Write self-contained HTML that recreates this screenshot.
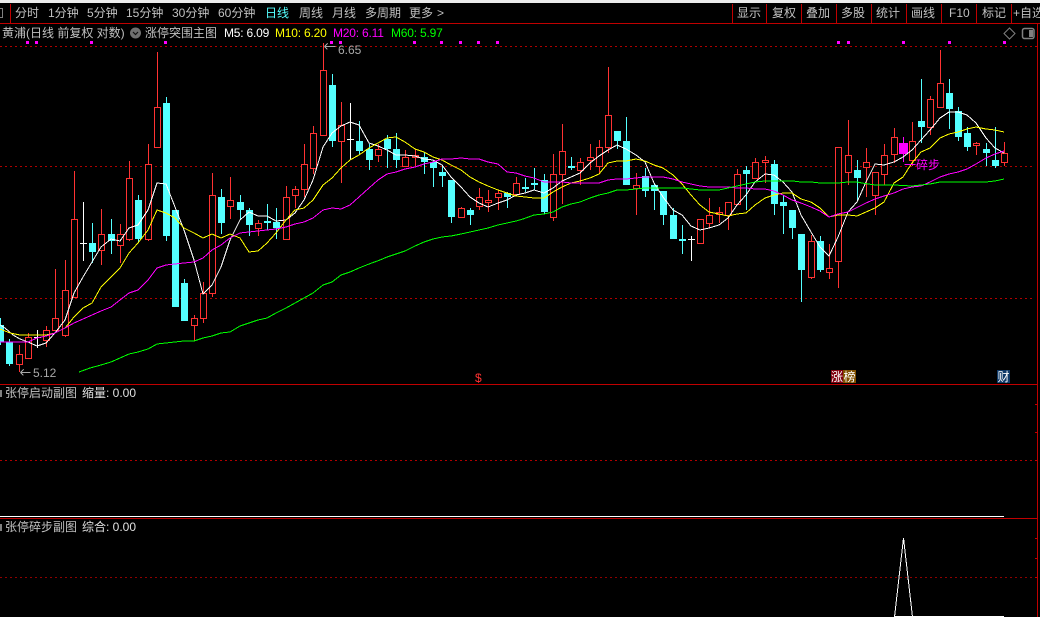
<!DOCTYPE html>
<html><head><meta charset="utf-8"><style>
html,body{margin:0;padding:0;background:#000;overflow:hidden}
#p{position:relative;width:1040px;height:617px;background:#000;overflow:hidden;font:12px/14px "Liberation Sans","WenQuanYi Zen Hei","Noto Sans CJK SC",sans-serif;color:#c0c0c0}
#p div{position:absolute;white-space:nowrap}
svg{position:absolute;left:0;top:0}
</style></head><body><div id="p">
<svg width="1040" height="617" viewBox="0 0 1040 617">
<rect x="0" y="0" width="1040" height="3" fill="#ececec"/>
<g shape-rendering="crispEdges" fill="none">
<path stroke="#c00000" d="M0 23.5H1040M10.5 4V23M732.5 4V23M766.5 4V23M801.5 4V23M836.5 4V23M871.5 4V23M906.5 4V23M941.5 4V23M976.5 4V23M1011.5 4V23M1037.5 23V617M0 384.5H1038M0 518.5H1038M1035 404.5h3M1035 432.5h3M1035 460.5h3M1035 538.5h3M1035 558.5h3M1035 577.5h3M1035 46.5h3"/>
<path stroke="#b00000" stroke-dasharray="2 3" d="M0 46.5H1034M0 166.5H1034M0 298.5H1034M0 460.5H1034"/>
<path stroke="#900000" stroke-dasharray="2 3" d="M0 577.5H1034"/>
<path stroke="#fff" d="M0 516.5H1004M894 616.5H1004"/>
<path stroke="#fff" d="M894.5 617L903.5 538L912.5 617"/>
<path stroke="#808080" d="M0 8.5h2.5v9h-2.5"/>
<path fill="#808080" stroke="none" d="M0 390h2v7h-2zM0 524h2v7h-2z"/>
<path fill="#ff00ff" stroke="none" d="M26 41h3v3h-3zM35 41h3v3h-3zM90 41h3v3h-3zM164 41h3v3h-3zM330 41h3v3h-3zM339 41h3v3h-3zM413 41h3v3h-3zM440 41h3v3h-3zM459 41h3v3h-3zM477 41h3v3h-3zM496 41h3v3h-3zM837 41h3v3h-3zM847 41h3v3h-3zM902 41h3v3h-3zM948 41h3v3h-3zM1003 41h3v3h-3z"/>
</g>
<g fill="none" stroke="#808080"><path d="M1009.5 28l5.5 5.5-5.5 5.5-5.5-5.5z"/><rect x="1022.5" y="28.5" width="11.5" height="10" rx="2" stroke-width="1.5"/><rect x="1029" y="30" width="4" height="7" fill="#808080" stroke="none"/></g>
<circle cx="135.5" cy="33" r="5.5" fill="#707070"/><path d="M133 32l2.5 2.5L138 32" fill="none" stroke="#111" stroke-width="1.2"/>
<g shape-rendering="crispEdges">
<path fill="none" stroke="#ff3232" d="M19.5 345V372M28.5 333V359M46.5 326V347M55.5 269V331M65.5 260V337M74.5 171V298M101.5 209V265M120.5 224V263M129.5 161V241M148.5 144V241M157.5 52V148M194.5 315V341M203.5 282V323M212.5 173V297M230.5 177V219M258.5 220V236M286.5 186V240M295.5 186V208M304.5 144V197M313.5 126V174M323.5 43V136M341.5 102V183M378.5 144V162M405.5 150V167M415.5 149V166M461.5 207V218M479.5 188V210M488.5 190V212M498.5 190V210M516.5 177V195M553.5 154V221M562.5 124V204M580.5 158V185M590.5 144V170M599.5 140V174M608.5 67V153M636.5 173V215M700.5 219V244M709.5 198V228M719.5 207V223M728.5 202V230M737.5 169V205M755.5 158V179M765.5 156V183M811.5 235V279M829.5 244V279M838.5 147V288M848.5 120V185M866.5 148V197M875.5 172V215M884.5 144V185M894.5 128V163M912.5 122V166M930.5 96V135M940.5 50V108M976.5 142V155M1004.5 142V166"/>
<path fill="#000" stroke="#ff3232" d="M16.5 354.5h6v10h-6zM25.5 337.5h6v21h-6zM43.5 330.5h6v10h-6zM52.5 318.5h6v12h-6zM62.5 290.5h6v45h-6zM71.5 219.5h6v78h-6zM98.5 234.5h6v16h-6zM117.5 234.5h6v11h-6zM126.5 178.5h6v61h-6zM145.5 164.5h6v75h-6zM154.5 107.5h6v40h-6zM191.5 318.5h6v7h-6zM200.5 293.5h6v25h-6zM209.5 195.5h6v98h-6zM227.5 200.5h6v6h-6zM255.5 223.5h6v5h-6zM283.5 197.5h6v42h-6zM292.5 189.5h6v6h-6zM301.5 164.5h6v25h-6zM310.5 133.5h6v35h-6zM320.5 70.5h6v65h-6zM338.5 125.5h6v16h-6zM375.5 149.5h6v6h-6zM402.5 157.5h6v9h-6zM412.5 155.5h6v2h-6zM458.5 208.5h6v9h-6zM476.5 197.5h6v9h-6zM485.5 200.5h6v2h-6zM495.5 193.5h6v4h-6zM513.5 183.5h6v11h-6zM550.5 174.5h6v43h-6zM559.5 151.5h6v23h-6zM577.5 162.5h6v8h-6zM587.5 157.5h6v3h-6zM596.5 147.5h6v19h-6zM605.5 115.5h6v32h-6zM633.5 185.5h6v3h-6zM697.5 219.5h6v24h-6zM706.5 215.5h6v8h-6zM716.5 212.5h6v2h-6zM725.5 202.5h6v13h-6zM734.5 174.5h6v30h-6zM752.5 162.5h6v16h-6zM762.5 160.5h6v2h-6zM808.5 241.5h6v36h-6zM826.5 268.5h6v4h-6zM835.5 147.5h6v114h-6zM845.5 155.5h6v17h-6zM863.5 162.5h6v5h-6zM872.5 172.5h6v23h-6zM881.5 155.5h6v19h-6zM891.5 137.5h6v17h-6zM909.5 141.5h6v19h-6zM927.5 99.5h6v28h-6zM937.5 83.5h6v24h-6zM973.5 143.5h6v2h-6zM1001.5 153.5h6v9h-6z"/>
<path fill="none" stroke="#54ffff" d="M0.5 318V345M9.5 339V366M92.5 223V263M111.5 219V254M138.5 195V243M166.5 97V241M175.5 210V307M184.5 279V321M221.5 189V234M240.5 195V219M249.5 208V236M267.5 204V230M276.5 208V239M332.5 74V147M359.5 121V154M369.5 144V170M387.5 135V168M396.5 133V168M424.5 152V174M433.5 160V187M442.5 165V187M451.5 180V223M470.5 208V225M507.5 192V208M525.5 178V192M534.5 168V190M544.5 174V214M571.5 157V170M617.5 131V149M626.5 117V185M645.5 168V197M654.5 183V210M663.5 191V225M673.5 208V239M682.5 225V254M746.5 166V210M774.5 160V215M783.5 195V234M792.5 210V239M801.5 234V302M820.5 236V272M857.5 160V200M921.5 79V143M949.5 79V129M958.5 107V141M967.5 127V151M986.5 143V166M995.5 127V168"/>
<path fill="#54ffff" d="M0 325h4v17h-4zM6 342h7v22h-7zM89 243h7v9h-7zM108 234h7v7h-7zM135 200h7v39h-7zM163 103h7v133h-7zM172 210h7v97h-7zM181 283h7v38h-7zM218 197h7v26h-7zM237 202h7v8h-7zM246 210h7v15h-7zM264 221h7v2h-7zM273 222h7v6h-7zM329 85h7v56h-7zM356 141h7v10h-7zM366 149h7v11h-7zM384 139h7v10h-7zM393 149h7v11h-7zM421 157h7v5h-7zM430 162h7v6h-7zM439 172h7v4h-7zM448 180h7v37h-7zM467 210h7v5h-7zM504 193h7v4h-7zM522 187h7v2h-7zM531 183h7v2h-7zM541 180h7v32h-7zM568 166h7v2h-7zM614 131h7v10h-7zM623 141h7v44h-7zM642 176h7v15h-7zM651 185h7v6h-7zM660 191h7v24h-7zM670 215h7v24h-7zM679 239h7v2h-7zM743 170h7v4h-7zM771 164h7v40h-7zM780 202h7v4h-7zM789 210h7v18h-7zM798 234h7v36h-7zM817 241h7v29h-7zM854 170h7v8h-7zM918 121h7v6h-7zM946 93h7v16h-7zM955 111h7v26h-7zM964 133h7v14h-7zM983 149h7v4h-7zM992 160h7v6h-7z"/>
<path fill="none" stroke="#fff" d="M37.5 330V348M34 337.5h7M83.5 202V261M80 243.5h7M350.5 103V160M347 139.5h7M691.5 236V261M688 239.5h7"/>
<path fill="none" stroke="#ff00ff" d="M903.5 137V162"/><path fill="#ff00ff" d="M899 143h9v11h-9z"/>
<path fill="none" stroke="#fff" stroke-linejoin="round" d="M0 325L5 328 13 335 20 339 28 342 37 346 46 343 55 333 65 320 74 293 83 277 92 262 101 247 111 239 120 241 129 228 138 225 148 210 157 183 166 184 175 207 184 230 194 260 203 294 212 285 221 267 230 240 240 220 249 212 258 216 267 216 276 221 286 220 295 213 304 200 313 180 323 147 332 133 341 126 350 122 359 125 369 143 378 146 387 150 396 155 405 155 415 156 424 159 433 160 442 165 451 177 461 187 470 197 479 203 488 207 498 203 507 200 516 195 525 193 534 190 544 193 553 188 562 181 571 177 580 173 590 163 599 156 608 150 617 145 626 149 636 155 645 162 654 183 663 197 673 210 682 215 691 226 700 230 709 228 719 225 728 218 737 205 746 195 755 182 765 174 774 175 783 182 792 192 801 215 811 232 820 247 829 256 838 237 848 212 857 202 866 182 875 164 884 165 894 162 903 157 912 150 921 140 930 130 940 118 949 112 958 112 967 115 976 123 986 138 995 148 1004 153"/>
<path fill="none" stroke="#ffff00" stroke-linejoin="round" d="M0 329L10 333 20 335 37 335 46 335 55 333 65 328 74 317 83 308 92 303 101 287 111 277 120 268 129 253 138 243 148 230 157 210 166 213 175 218 184 228 194 233 203 238 212 234 221 238 230 234 240 238 249 252 258 251 267 243 276 233 286 220 295 210 304 208 313 200 323 185 332 178 341 168 350 160 359 155 369 148 378 143 387 138 396 137 405 142 415 149 424 152 433 157 442 160 451 165 461 170 470 177 479 182 488 186 498 190 507 193 516 196 525 197 534 198 544 198 553 192 562 187 571 183 580 181 590 178 599 174 608 163 617 161 626 161 636 159 645 161 654 165 663 168 673 175 682 184 691 195 700 205 709 212 719 214 728 216 737 214 746 213 755 205 765 198 774 195 783 193 792 193 801 199 811 202 820 208 829 217 838 215 848 215 857 216 866 212 875 208 884 202 894 183 903 177 912 163 921 152 930 148 940 138 949 134 958 132 967 129 976 127 986 129 995 130 1004 132"/>
<path fill="none" stroke="#ff00ff" stroke-linejoin="round" d="M0 342L19 342 28 342 37 338 46 336 55 333 65 328 74 323 83 319 92 315 101 311 111 307 120 300 129 293 138 290 148 280 157 268 166 265 184 263 194 262 203 258 212 250 221 245 230 238 240 233 249 232 258 231 267 230 276 229 286 227 295 224 304 222 313 218 323 210 332 208 341 209 350 205 359 197 369 188 378 180 387 174 396 172 405 169 415 167 424 164 433 162 442 159 451 159 461 158 470 159 479 159 488 162 498 164 507 172 516 173 525 176 534 178 544 182 553 182 562 182 571 183 590 183 599 183 608 180 617 179 626 179 636 178 645 177 654 177 663 177 673 179 682 182 691 184 700 186 709 187 728 187 737 188 746 188 755 189 765 189 774 191 783 195 792 200 801 203 811 207 820 211 829 217 838 214 848 212 866 203 875 199 884 196 894 193 903 189 912 187 921 186 930 182 940 177 949 174 958 172 967 169 976 164 986 158 995 154 1004 151"/>
<path fill="none" stroke="#00ff00" stroke-linejoin="round" d="M79 372L90 368 101 365 111 362 120 358 129 354 138 352 148 349 157 344 166 343 184 341 194 341 203 338 212 336 221 333 230 332 240 326 249 323 258 320 267 318 276 313 286 308 295 303 304 298 313 293 323 285 332 282 341 275 350 272 359 268 369 264 380 260 387 257 396 254 405 251 415 246 424 242 433 239 442 237 451 236 461 234 470 232 479 230 488 228 498 225 507 223 516 221 523 219 534 215 544 214 553 212 562 207 571 204 580 202 590 198 599 195 608 193 617 190 626 190 636 189 645 188 654 188 673 188 682 188 691 189 700 190 719 190 728 188 737 186 746 184 755 182 765 181 793 181 801 182 811 182 820 183 838 183 848 182 857 182 862 183 875 185 894 185 912 186 921 185 930 184 940 182 958 182 986 182 995 181 1004 179"/>
<path fill="none" stroke="#a8a8a8" d="M324.5 46.5h11M324.5 46.5l3-3M324.5 46.5l3 3M20.5 372.5h10M20.5 372.5l3-3M20.5 372.5l3 3"/>
</g>
</svg>
<div style="left:15px;top:6px">分时</div>
<div style="left:48px;top:6px">1分钟</div>
<div style="left:87px;top:6px">5分钟</div>
<div style="left:126px;top:6px">15分钟</div>
<div style="left:172px;top:6px">30分钟</div>
<div style="left:218px;top:6px">60分钟</div>
<div style="left:265px;top:6px;color:#54ffff">日线</div>
<div style="left:299px;top:6px">周线</div>
<div style="left:332px;top:6px">月线</div>
<div style="left:365px;top:6px">多周期</div>
<div style="left:409px;top:6px">更多</div>
<div style="left:437px;top:6px">&gt;</div>
<div style="left:737px;top:6px">显示</div>
<div style="left:772px;top:6px">复权</div>
<div style="left:806px;top:6px">叠加</div>
<div style="left:841px;top:6px">多股</div>
<div style="left:876px;top:6px">统计</div>
<div style="left:911px;top:6px">画线</div>
<div style="left:949px;top:6px">F10</div>
<div style="left:982px;top:6px">标记</div>
<div style="left:1013px;top:6px">+自选</div>
<div style="left:2px;top:26px">黄浦(日线 前复权 对数)</div>
<div style="left:145px;top:26px">涨停突围主图</div>
<div style="left:224px;top:26px;color:#fff;letter-spacing:-.2px">M5: 6.09</div>
<div style="left:275px;top:26px;color:#ff0;letter-spacing:-.2px">M10: 6.20</div>
<div style="left:333px;top:26px;color:#f0f;letter-spacing:-.2px">M20: 6.11</div>
<div style="left:391px;top:26px;color:#0f0;letter-spacing:-.2px">M60: 5.97</div>
<div style="left:338px;top:43px;color:#a8a8a8">6.65</div>
<div style="left:33px;top:366px;color:#a8a8a8">5.12</div>
<div style="left:904px;top:158px;color:#f0f">一碎步</div>
<div style="left:475px;top:371px;color:#ff3232">$</div>
<div style="left:831px;top:370px;width:12px;height:13px;background:#800010;color:#fff;text-align:center">涨</div>
<div style="left:843px;top:370px;width:13px;height:13px;background:#805000;color:#fff;text-align:center">榜</div>
<div style="left:997px;top:370px;width:13px;height:13px;background:#103a68;color:#fff;text-align:center">财</div>
<div style="left:5px;top:386px">张停启动副图</div>
<div style="left:82px;top:386px;color:#e0e0e0">缩量: 0.00</div>
<div style="left:5px;top:520px">张停碎步副图</div>
<div style="left:82px;top:520px;color:#e0e0e0">综合: 0.00</div>
</div></body></html>
